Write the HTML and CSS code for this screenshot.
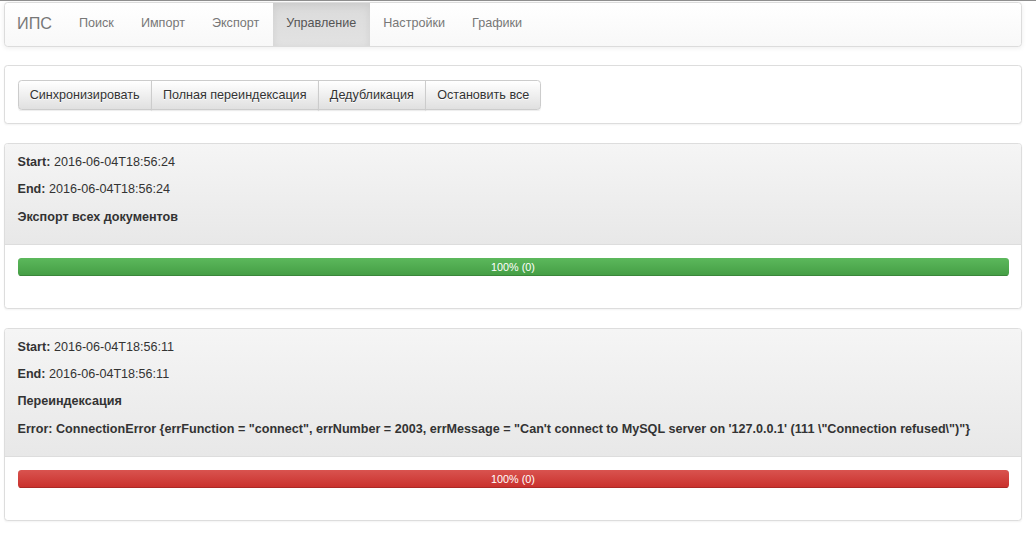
FILE: index.html
```html
<!DOCTYPE html>
<html lang="ru">
<head>
<meta charset="utf-8">
<title>ИПС</title>
<link rel="stylesheet" href="styles.css">
</head>
<body>
<div class="page">
  <nav class="navbar">
    <span class="brand">ИПС</span>
    <ul class="nav">
      <li><a>Поиск</a></li>
      <li><a>Импорт</a></li>
      <li><a>Экспорт</a></li>
      <li class="active"><a>Управление</a></li>
      <li><a>Настройки</a></li>
      <li><a>Графики</a></li>
    </ul>
  </nav>

  <div class="panel">
    <div class="panel-body">
      <div class="btn-group">
        <button class="btn">Синхронизировать</button>
        <button class="btn">Полная переиндексация</button>
        <button class="btn">Дедубликация</button>
        <button class="btn">Остановить все</button>
      </div>
    </div>
  </div>

  <div class="panel">
    <div class="panel-heading">
      <p><b>Start:</b> 2016-06-04T18:56:24</p>
      <p><b>End:</b> 2016-06-04T18:56:24</p>
      <p><b>Экспорт всех документов</b></p>
    </div>
    <div class="panel-body">
      <div class="progress">
        <div class="bar bar-success" style="width:100%">100% (0)</div>
      </div>
    </div>
  </div>

  <div class="panel">
    <div class="panel-heading">
      <p><b>Start:</b> 2016-06-04T18:56:11</p>
      <p><b>End:</b> 2016-06-04T18:56:11</p>
      <p><b>Переиндексация</b></p>
      <p><b>Error: ConnectionError {errFunction = "connect", errNumber = 2003, errMessage = "Can't connect to MySQL server on '127.0.0.1' (111 \"Connection refused\")"}</b></p>
    </div>
    <div class="panel-body">
      <div class="progress">
        <div class="bar bar-danger" style="width:100%">100% (0)</div>
      </div>
    </div>
  </div>
</div>
</body>
</html>
```

FILE: styles.css
```css
html, body {
  margin: 0;
  padding: 0;
  background: #fff;
}
body {
  border-top: 1px solid #8e8e8e;
  font-family: "Liberation Sans", Arial, sans-serif;
  font-size: 12.6px;
  line-height: 18px;
  color: #333;
}
.page {
  padding: 1px 14px 0 4px;
}
.navbar {
  display: flex;
  align-items: stretch;
  height: 43px;
  border: 1px solid #dcdcdc;
  border-radius: 3.6px;
  background: linear-gradient(to bottom, #fff 0%, #f8f8f8 100%);
  box-shadow: inset 0 1px 0 rgba(255,255,255,.15), 0 1px 5px rgba(0,0,0,.075);
  margin-bottom: 18px;
  overflow: hidden;
}
.brand {
  display: flex;
  align-items: center;
  padding: 0 13.5px 3px 12px;
  font-size: 16.2px;
  color: #777;
}
.nav {
  display: flex;
  list-style: none;
  margin: 0;
  padding: 0;
}
.nav li {
  display: flex;
}
.nav a {
  display: flex;
  align-items: center;
  padding: 0 13.5px 3px;
  color: #777;
  cursor: pointer;
}
.nav .active a {
  color: #555;
  background: linear-gradient(to bottom, #dbdbdb 0%, #e2e2e2 100%);
  box-shadow: inset 0 3px 9px rgba(0,0,0,.075);
}
.panel {
  border: 1px solid #ddd;
  border-radius: 3.6px;
  background: #fff;
  box-shadow: 0 1px 2px rgba(0,0,0,.05);
  margin-bottom: 19px;
  overflow: hidden;
}
.panel-body {
  padding: 13.5px 12.5px;
}
.panel-heading {
  padding: 9px 12.5px 8.5px;
  background: linear-gradient(to bottom, #f5f5f5 0%, #e8e8e8 100%);
  border-bottom: 1px solid #ddd;
}
.panel-heading p {
  margin: 0;
  padding-bottom: 9.4px;
}
.panel-heading b {
  font-weight: bold;
}
.btn-group {
  display: flex;
}
.btn {
  font-family: inherit;
  font-size: 12.6px;
  line-height: 18px;
  color: #333;
  padding: 5px 11.2px;
  border: 1px solid #ccc;
  background: linear-gradient(to bottom, #fff 0%, #e0e0e0 100%);
  text-shadow: 0 1px 0 #fff;
  box-shadow: inset 0 1px 0 rgba(255,255,255,.15), 0 1px 1px rgba(0,0,0,.075);
  border-radius: 0;
  margin: 0 0 0 -1px;
  cursor: pointer;
}
.btn:first-child {
  margin-left: 0;
  border-radius: 3.6px 0 0 3.6px;
}
.btn:last-child {
  border-radius: 0 3.6px 3.6px 0;
}
.progress {
  height: 18px;
  margin-bottom: 18px;
  border-radius: 3.6px;
  overflow: hidden;
  background: linear-gradient(to bottom, #ebebeb 0%, #f5f5f5 100%);
  box-shadow: inset 0 1px 2px rgba(0,0,0,.1);
  display: flex;
}
.bar {
  height: 18px;
  line-height: 18px;
  font-size: 10.8px;
  color: #fff;
  text-align: center;
  box-shadow: inset 0 -1px 0 rgba(0,0,0,.15);
}
.bar-success {
  background: linear-gradient(to bottom, #5cb85c 0%, #449d44 100%);
}
.bar-danger {
  background: linear-gradient(to bottom, #d9534f 0%, #c9302c 100%);
}
```
